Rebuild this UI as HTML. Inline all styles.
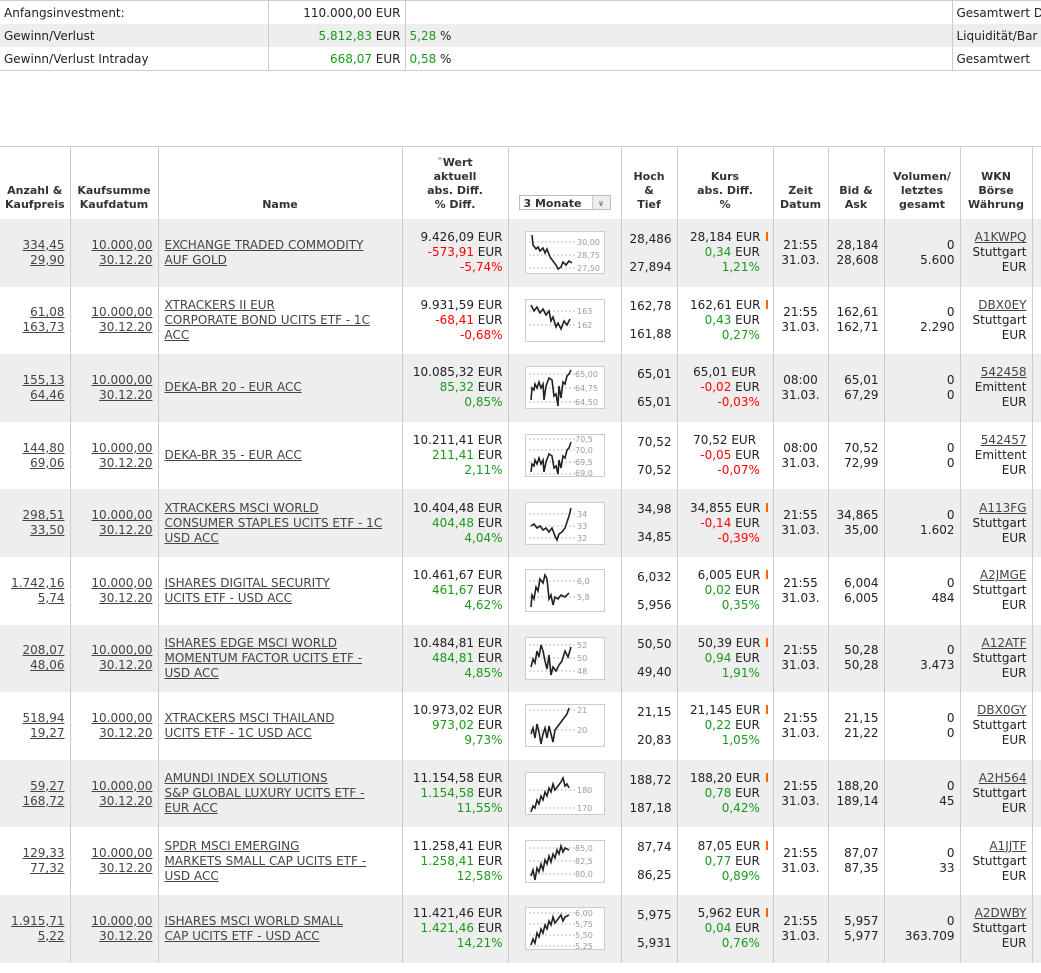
<!DOCTYPE html>
<html><head><meta charset="utf-8">
<style>
body{margin:0;background:#fff;font-family:"DejaVu Sans","Liberation Sans",sans-serif;font-size:12px;color:#222;width:1041px;height:973px;overflow:hidden}
table{border-collapse:collapse;table-layout:fixed}
.top{position:absolute;left:0;top:0;width:1060px;border-top:1px solid #ccc;border-bottom:1px solid #ccc}
.top td{height:23px;padding:0 4px;white-space:nowrap;overflow:hidden}
.top td+td{border-left:1px solid #ccc}
.g{color:#1a9a1a}.r{color:#f00}
.main{position:absolute;left:0;top:146px;width:1045px;border-top:1px solid #ccc}
.main td,.main th{border-left:1px solid #ccc;padding:0 5px;line-height:15px;white-space:nowrap;overflow:hidden}
.main tr td:first-child,.main tr th:first-child{border-left:none}
.main th{font-size:11px;font-weight:bold;color:#333;vertical-align:bottom;padding-bottom:7px;height:65px;text-align:center;line-height:14px}
.main tbody tr{height:67.6px}
.main tbody tr:nth-child(odd){background:#eee}
.ra{text-align:right}.ce{text-align:center}
a{color:#444;text-decoration:underline}
.main td.nm{padding-left:6px}
.sel{display:inline-block;width:92px;height:15px;border:1px solid #bbb;background:#fff;text-align:left;font-size:11px;line-height:15px;padding-left:4px;box-sizing:border-box;position:relative;margin-bottom:2px}
.sel i{position:absolute;right:0;top:0;width:17px;height:13px;border-left:1px solid #ccc;background:#eee;font-style:normal;font-size:8px;text-align:center;color:#888}
.o{display:inline-block;width:2px;height:9px;background:#f60;margin-left:5px;vertical-align:top;margin-top:2px}
.main td.ht{line-height:28px}
svg{display:block;margin:0 auto}
</style></head><body>
<table class="top">
<colgroup><col style="width:268px"><col style="width:137px"><col style="width:547px"><col style="width:108px"></colgroup>
<tr><td>Anfangsinvestment:</td><td class="ra">110.000,00 EUR</td><td></td><td>Gesamtwert D</td></tr>
<tr style="background:#eee"><td>Gewinn/Verlust</td><td class="ra"><span class="g">5.812,83</span> EUR</td><td><span class="g">5,28</span> %</td><td>Liquidität/Bar</td></tr>
<tr><td>Gewinn/Verlust Intraday</td><td class="ra"><span class="g">668,07</span> EUR</td><td><span class="g">0,58</span> %</td><td>Gesamtwert</td></tr>
</table>

<table class="main">
<colgroup><col style="width:70px"><col style="width:88px"><col style="width:244px"><col style="width:106px"><col style="width:113px"><col style="width:56px"><col style="width:96px"><col style="width:55px"><col style="width:56px"><col style="width:76px"><col style="width:72px"><col style="width:13px"></colgroup>
<thead><tr>
<th>Anzahl &amp;<br>Kaufpreis</th><th>Kaufsumme<br>Kaufdatum</th><th>Name</th><th><span style="color:#c47">&#710;</span>Wert<br>aktuell<br>abs. Diff.<br>% Diff.</th><th><span class="sel">3 Monate<i>&#8744;</i></span></th><th>Hoch<br>&amp;<br>Tief</th><th>Kurs<br>abs. Diff.<br>%</th><th>Zeit<br>Datum</th><th>Bid &amp;<br>Ask</th><th>Volumen/<br>letztes<br>gesamt</th><th>WKN<br>Börse<br>Währung</th><th></th>
</tr></thead>
<tbody>
<tr><td class="ra"><a>334,45<br>29,90</a></td><td class="ra"><a>10.000,00<br>30.12.20</a></td><td class="nm"><a>EXCHANGE TRADED COMMODITY<br>AUF GOLD</a></td><td class="ra">9.426,09 EUR<br><span class="r">-573,91</span> EUR<br><span class="r">-5,74%</span></td>
<td><svg width="80" height="43"><rect x=".5" y=".5" width="79" height="42" fill="#fff" stroke="#ccc"/><g stroke="#bbb" stroke-dasharray="2,2"><line x1="4" y1="11" x2="52" y2="11"/><line x1="4" y1="24" x2="52" y2="24"/><line x1="4" y1="37" x2="52" y2="37"/></g><polyline fill="none" stroke="#222" stroke-width="1.6" points="7,4 8,14 11,18 13,16 15,20 18,17 20,22 22,18 25,26 28,30 31,34 33,38 36,36 38,31 41,34 44,30 47,32"/><g font-size="8" fill="#999"><text x="52" y="14">30,00</text><text x="52" y="27">28,75</text><text x="52" y="40">27,50</text></g></svg></td>
<td class="ra ht">28,486<br>27,894</td><td class="ra">28,184 EUR<span class="o"></span><br><span class="g">0,34</span> EUR&nbsp;&nbsp;<br><span class="g">1,21%</span>&nbsp;&nbsp;</td><td class="ce">21:55<br>31.03.</td><td class="ra">28,184<br>28,608</td><td class="ra">0<br>5.600</td><td class="ra"><a>A1KWPQ</a><br>Stuttgart<br>EUR</td><td></td></tr>

<tr><td class="ra"><a>61,08<br>163,73</a></td><td class="ra"><a>10.000,00<br>30.12.20</a></td><td class="nm"><a>XTRACKERS II EUR<br>CORPORATE BOND UCITS ETF - 1C<br>ACC</a></td><td class="ra">9.931,59 EUR<br><span class="r">-68,41</span> EUR<br><span class="r">-0,68%</span></td>
<td><svg width="80" height="43"><rect x=".5" y=".5" width="79" height="42" fill="#fff" stroke="#ccc"/><g stroke="#bbb" stroke-dasharray="2,2"><line x1="4" y1="12" x2="52" y2="12"/><line x1="4" y1="26" x2="52" y2="26"/></g><polyline fill="none" stroke="#222" stroke-width="1.6" points="6,6 9,12 12,8 15,14 18,10 21,16 24,12 26,22 28,18 31,28 33,24 36,30 39,22 42,26 45,20"/><g font-size="8" fill="#999"><text x="52" y="15">163</text><text x="52" y="29">162</text></g></svg></td>
<td class="ra ht">162,78<br>161,88</td><td class="ra">162,61 EUR<span class="o"></span><br><span class="g">0,43</span> EUR&nbsp;&nbsp;<br><span class="g">0,27%</span>&nbsp;&nbsp;</td><td class="ce">21:55<br>31.03.</td><td class="ra">162,61<br>162,71</td><td class="ra">0<br>2.290</td><td class="ra"><a>DBX0EY</a><br>Stuttgart<br>EUR</td><td></td></tr>

<tr><td class="ra"><a>155,13<br>64,46</a></td><td class="ra"><a>10.000,00<br>30.12.20</a></td><td class="nm"><a>DEKA-BR 20 - EUR ACC</a></td><td class="ra">10.085,32 EUR<br><span class="g">85,32</span> EUR<br><span class="g">0,85%</span></td>
<td><svg width="80" height="43"><rect x=".5" y=".5" width="79" height="42" fill="#fff" stroke="#ccc"/><g stroke="#bbb" stroke-dasharray="2,2"><line x1="4" y1="8" x2="52" y2="8"/><line x1="4" y1="22" x2="52" y2="22"/><line x1="4" y1="36" x2="52" y2="36"/></g><polyline fill="none" stroke="#222" stroke-width="1.6" points="6,34 7,22 9,24 10,18 12,22 14,16 16,22 18,18 19,34 21,20 24,12 27,14 29,30 31,28 33,40 34,20 36,32 38,16 40,18 42,10 44,8 46,4"/><g font-size="8" fill="#999"><text x="50" y="11">65,00</text><text x="50" y="25">64,75</text><text x="50" y="39">64,50</text></g></svg></td>
<td class="ra ht">65,01<br>65,01</td><td class="ra">65,01 EUR&nbsp;&nbsp;&nbsp;<br><span class="r">-0,02</span> EUR&nbsp;&nbsp;<br><span class="r">-0,03%</span>&nbsp;&nbsp;</td><td class="ce">08:00<br>31.03.</td><td class="ra">65,01<br>67,29</td><td class="ra">0<br>0</td><td class="ra"><a>542458</a><br>Emittent<br>EUR</td><td></td></tr>

<tr><td class="ra"><a>144,80<br>69,06</a></td><td class="ra"><a>10.000,00<br>30.12.20</a></td><td class="nm"><a>DEKA-BR 35 - EUR ACC</a></td><td class="ra">10.211,41 EUR<br><span class="g">211,41</span> EUR<br><span class="g">2,11%</span></td>
<td><svg width="80" height="43"><rect x=".5" y=".5" width="79" height="42" fill="#fff" stroke="#ccc"/><g stroke="#bbb" stroke-dasharray="2,2"><line x1="4" y1="5" x2="52" y2="5"/><line x1="4" y1="16" x2="52" y2="16"/><line x1="4" y1="28" x2="52" y2="28"/><line x1="4" y1="40" x2="52" y2="40"/></g><polyline fill="none" stroke="#222" stroke-width="1.6" points="6,38 7,30 9,32 10,26 12,30 14,24 16,30 18,26 19,38 21,28 24,20 27,22 29,34 31,32 33,40 34,26 36,34 38,22 40,24 42,16 44,14 46,8"/><g font-size="8" fill="#999"><text x="50" y="8">70,5</text><text x="50" y="19">70,0</text><text x="50" y="31">69,5</text><text x="50" y="42">69,0</text></g></svg></td>
<td class="ra ht">70,52<br>70,52</td><td class="ra">70,52 EUR&nbsp;&nbsp;&nbsp;<br><span class="r">-0,05</span> EUR&nbsp;&nbsp;<br><span class="r">-0,07%</span>&nbsp;&nbsp;</td><td class="ce">08:00<br>31.03.</td><td class="ra">70,52<br>72,99</td><td class="ra">0<br>0</td><td class="ra"><a>542457</a><br>Emittent<br>EUR</td><td></td></tr>

<tr><td class="ra"><a>298,51<br>33,50</a></td><td class="ra"><a>10.000,00<br>30.12.20</a></td><td class="nm"><a>XTRACKERS MSCI WORLD<br>CONSUMER STAPLES UCITS ETF - 1C<br>USD ACC</a></td><td class="ra">10.404,48 EUR<br><span class="g">404,48</span> EUR<br><span class="g">4,04%</span></td>
<td><svg width="80" height="43"><rect x=".5" y=".5" width="79" height="42" fill="#fff" stroke="#ccc"/><g stroke="#bbb" stroke-dasharray="2,2"><line x1="4" y1="12" x2="52" y2="12"/><line x1="4" y1="24" x2="52" y2="24"/><line x1="4" y1="36" x2="52" y2="36"/></g><polyline fill="none" stroke="#222" stroke-width="1.6" points="6,24 9,22 12,26 15,24 18,28 21,26 24,30 27,26 30,34 32,38 34,32 37,30 40,26 42,20 44,14 46,6"/><g font-size="8" fill="#999"><text x="52" y="15">34</text><text x="52" y="27">33</text><text x="52" y="39">32</text></g></svg></td>
<td class="ra ht">34,98<br>34,85</td><td class="ra">34,855 EUR<span class="o"></span><br><span class="r">-0,14</span> EUR&nbsp;&nbsp;<br><span class="r">-0,39%</span>&nbsp;&nbsp;</td><td class="ce">21:55<br>31.03.</td><td class="ra">34,865<br>35,00</td><td class="ra">0<br>1.602</td><td class="ra"><a>A113FG</a><br>Stuttgart<br>EUR</td><td></td></tr>

<tr><td class="ra"><a>1.742,16<br>5,74</a></td><td class="ra"><a>10.000,00<br>30.12.20</a></td><td class="nm"><a>ISHARES DIGITAL SECURITY<br>UCITS ETF - USD ACC</a></td><td class="ra">10.461,67 EUR<br><span class="g">461,67</span> EUR<br><span class="g">4,62%</span></td>
<td><svg width="80" height="43"><rect x=".5" y=".5" width="79" height="42" fill="#fff" stroke="#ccc"/><g stroke="#bbb" stroke-dasharray="2,2"><line x1="4" y1="12" x2="52" y2="12"/><line x1="4" y1="28" x2="52" y2="28"/></g><polyline fill="none" stroke="#222" stroke-width="1.6" points="6,38 7,26 9,30 11,18 13,22 15,10 18,14 20,6 22,10 24,30 26,26 28,36 30,28 33,30 36,26 40,28 44,24"/><g font-size="8" fill="#999"><text x="52" y="15">6,0</text><text x="52" y="31">5,8</text></g></svg></td>
<td class="ra ht">6,032<br>5,956</td><td class="ra">6,005 EUR<span class="o"></span><br><span class="g">0,02</span> EUR&nbsp;&nbsp;<br><span class="g">0,35%</span>&nbsp;&nbsp;</td><td class="ce">21:55<br>31.03.</td><td class="ra">6,004<br>6,005</td><td class="ra">0<br>484</td><td class="ra"><a>A2JMGE</a><br>Stuttgart<br>EUR</td><td></td></tr>

<tr><td class="ra"><a>208,07<br>48,06</a></td><td class="ra"><a>10.000,00<br>30.12.20</a></td><td class="nm"><a>ISHARES EDGE MSCI WORLD<br>MOMENTUM FACTOR UCITS ETF -<br>USD ACC</a></td><td class="ra">10.484,81 EUR<br><span class="g">484,81</span> EUR<br><span class="g">4,85%</span></td>
<td><svg width="80" height="43"><rect x=".5" y=".5" width="79" height="42" fill="#fff" stroke="#ccc"/><g stroke="#bbb" stroke-dasharray="2,2"><line x1="4" y1="8" x2="52" y2="8"/><line x1="4" y1="21" x2="52" y2="21"/><line x1="4" y1="34" x2="52" y2="34"/></g><polyline fill="none" stroke="#222" stroke-width="1.6" points="6,30 8,22 10,26 12,14 14,20 16,8 18,14 20,24 22,32 24,18 26,38 28,30 31,34 34,28 37,24 40,14 43,20 46,10"/><g font-size="8" fill="#999"><text x="52" y="11">52</text><text x="52" y="24">50</text><text x="52" y="37">48</text></g></svg></td>
<td class="ra ht">50,50<br>49,40</td><td class="ra">50,39 EUR<span class="o"></span><br><span class="g">0,94</span> EUR&nbsp;&nbsp;<br><span class="g">1,91%</span>&nbsp;&nbsp;</td><td class="ce">21:55<br>31.03.</td><td class="ra">50,28<br>50,28</td><td class="ra">0<br>3.473</td><td class="ra"><a>A12ATF</a><br>Stuttgart<br>EUR</td><td></td></tr>

<tr><td class="ra"><a>518,94<br>19,27</a></td><td class="ra"><a>10.000,00<br>30.12.20</a></td><td class="nm"><a>XTRACKERS MSCI THAILAND<br>UCITS ETF - 1C USD ACC</a></td><td class="ra">10.973,02 EUR<br><span class="g">973,02</span> EUR<br><span class="g">9,73%</span></td>
<td><svg width="80" height="43"><rect x=".5" y=".5" width="79" height="42" fill="#fff" stroke="#ccc"/><g stroke="#bbb" stroke-dasharray="2,2"><line x1="4" y1="6" x2="52" y2="6"/><line x1="4" y1="26" x2="52" y2="26"/></g><polyline fill="none" stroke="#222" stroke-width="1.6" points="6,30 8,24 10,34 12,20 14,28 16,40 18,30 20,24 22,34 24,22 26,30 28,38 30,26 33,22 36,18 39,14 42,10 44,4"/><g font-size="8" fill="#999"><text x="52" y="9">21</text><text x="52" y="29">20</text></g></svg></td>
<td class="ra ht">21,15<br>20,83</td><td class="ra">21,145 EUR<span class="o"></span><br><span class="g">0,22</span> EUR&nbsp;&nbsp;<br><span class="g">1,05%</span>&nbsp;&nbsp;</td><td class="ce">21:55<br>31.03.</td><td class="ra">21,15<br>21,22</td><td class="ra">0<br>0</td><td class="ra"><a>DBX0GY</a><br>Stuttgart<br>EUR</td><td></td></tr>

<tr><td class="ra"><a>59,27<br>168,72</a></td><td class="ra"><a>10.000,00<br>30.12.20</a></td><td class="nm"><a>AMUNDI INDEX SOLUTIONS<br>S&amp;P GLOBAL LUXURY UCITS ETF -<br>EUR ACC</a></td><td class="ra">11.154,58 EUR<br><span class="g">1.154,58</span> EUR<br><span class="g">11,55%</span></td>
<td><svg width="80" height="43"><rect x=".5" y=".5" width="79" height="42" fill="#fff" stroke="#ccc"/><g stroke="#bbb" stroke-dasharray="2,2"><line x1="4" y1="18" x2="52" y2="18"/><line x1="4" y1="36" x2="52" y2="36"/></g><polyline fill="none" stroke="#222" stroke-width="1.6" points="6,40 8,34 10,36 12,28 14,32 16,24 18,28 20,20 22,24 24,16 26,20 28,12 30,18 33,14 36,10 38,6 40,14 42,12 44,16"/><g font-size="8" fill="#999"><text x="52" y="21">180</text><text x="52" y="39">170</text></g></svg></td>
<td class="ra ht">188,72<br>187,18</td><td class="ra">188,20 EUR<span class="o"></span><br><span class="g">0,78</span> EUR&nbsp;&nbsp;<br><span class="g">0,42%</span>&nbsp;&nbsp;</td><td class="ce">21:55<br>31.03.</td><td class="ra">188,20<br>189,14</td><td class="ra">0<br>45</td><td class="ra"><a>A2H564</a><br>Stuttgart<br>EUR</td><td></td></tr>

<tr><td class="ra"><a>129,33<br>77,32</a></td><td class="ra"><a>10.000,00<br>30.12.20</a></td><td class="nm"><a>SPDR MSCI EMERGING<br>MARKETS SMALL CAP UCITS ETF -<br>USD ACC</a></td><td class="ra">11.258,41 EUR<br><span class="g">1.258,41</span> EUR<br><span class="g">12,58%</span></td>
<td><svg width="80" height="43"><rect x=".5" y=".5" width="79" height="42" fill="#fff" stroke="#ccc"/><g stroke="#bbb" stroke-dasharray="2,2"><line x1="4" y1="8" x2="52" y2="8"/><line x1="4" y1="21" x2="52" y2="21"/><line x1="4" y1="34" x2="52" y2="34"/></g><polyline fill="none" stroke="#222" stroke-width="1.6" points="6,36 8,30 10,40 12,28 14,32 16,24 18,30 20,20 22,24 24,16 26,22 28,14 30,18 32,10 34,14 36,6 38,12 40,8 44,10"/><g font-size="8" fill="#999"><text x="50" y="11">85,0</text><text x="50" y="24">82,5</text><text x="50" y="37">80,0</text></g></svg></td>
<td class="ra ht">87,74<br>86,25</td><td class="ra">87,05 EUR<span class="o"></span><br><span class="g">0,77</span> EUR&nbsp;&nbsp;<br><span class="g">0,89%</span>&nbsp;&nbsp;</td><td class="ce">21:55<br>31.03.</td><td class="ra">87,07<br>87,35</td><td class="ra">0<br>33</td><td class="ra"><a>A1JJTF</a><br>Stuttgart<br>EUR</td><td></td></tr>

<tr><td class="ra"><a>1.915,71<br>5,22</a></td><td class="ra"><a>10.000,00<br>30.12.20</a></td><td class="nm"><a>ISHARES MSCI WORLD SMALL<br>CAP UCITS ETF - USD ACC</a></td><td class="ra">11.421,46 EUR<br><span class="g">1.421,46</span> EUR<br><span class="g">14,21%</span></td>
<td><svg width="80" height="43"><rect x=".5" y=".5" width="79" height="42" fill="#fff" stroke="#ccc"/><g stroke="#bbb" stroke-dasharray="2,2"><line x1="4" y1="6" x2="52" y2="6"/><line x1="4" y1="17" x2="52" y2="17"/><line x1="4" y1="28" x2="52" y2="28"/><line x1="4" y1="39" x2="52" y2="39"/></g><polyline fill="none" stroke="#222" stroke-width="1.6" points="6,38 8,32 10,36 12,26 14,30 16,22 18,26 20,18 22,22 24,14 26,18 28,10 30,16 33,12 36,8 38,14 40,10 44,8"/><g font-size="8" fill="#999"><text x="50" y="9">6,00</text><text x="50" y="20">5,75</text><text x="50" y="31">5,50</text><text x="50" y="42">5,25</text></g></svg></td>
<td class="ra ht">5,975<br>5,931</td><td class="ra">5,962 EUR<span class="o"></span><br><span class="g">0,04</span> EUR&nbsp;&nbsp;<br><span class="g">0,76%</span>&nbsp;&nbsp;</td><td class="ce">21:55<br>31.03.</td><td class="ra">5,957<br>5,977</td><td class="ra">0<br>363.709</td><td class="ra"><a>A2DWBY</a><br>Stuttgart<br>EUR</td><td></td></tr>
</tbody></table>
</body></html>
